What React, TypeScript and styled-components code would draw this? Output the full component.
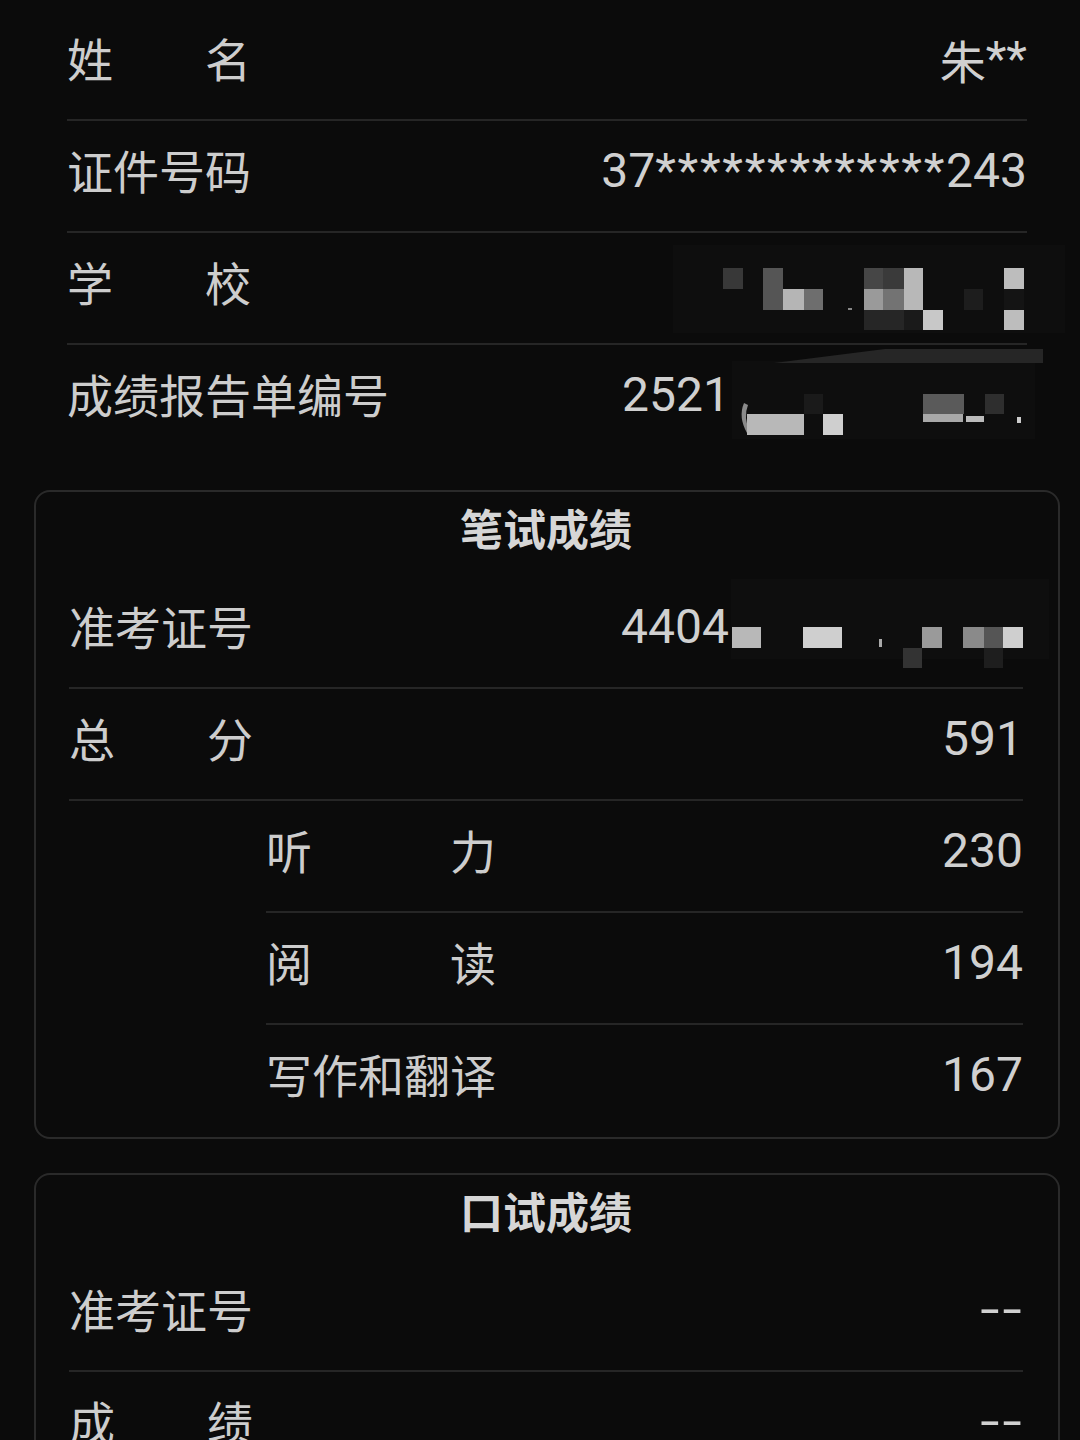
import React from 'react';
import styled, { createGlobalStyle } from 'styled-components';

const GlobalStyle = createGlobalStyle`
  html, body { margin: 0; padding: 0; background: #0b0b0b; }
  body { font-family: Roboto, "Noto Sans CJK SC", sans-serif; }
`;

const Page = styled.div`
  width: 1080px;
  height: 1440px;
  box-sizing: border-box;
  padding: 9px 20px 0 34px;
  background: #0b0b0b;
  color: #cfcfcf;
  overflow: hidden;
`;

const InfoList = styled.section`
  padding: 0 33px;
  margin-bottom: 33px;
`;

const Card = styled.section`
  border: 2px solid #2a2a2a;
  border-radius: 16px;
  padding: 0 35px 0 33px;
  margin-bottom: 34px;
`;

const CardTitle = styled.h2`
  margin: 0;
  padding-top: 9px;
  margin-bottom: 24px;
  font-family: "Noto Sans CJK SC", sans-serif;
  font-size: 43px;
  font-weight: 700;
  line-height: 52px;
  text-align: center;
  color: #d6d6d6;
`;

const Row = styled.div<{ $indent?: number; $last?: boolean }>`
  display: flex;
  align-items: center;
  justify-content: space-between;
  margin-left: ${(p) => p.$indent ?? 0}px;
  padding: 22px 0 ${(p) => (p.$last ? 38 : 36)}px;
  border-bottom: ${(p) => (p.$last ? 'none' : '2px solid #262626')};
  line-height: 52px;
`;

const Label = styled.span<{ $span?: number }>`
  font-family: "Noto Sans CJK SC", sans-serif;
  font-size: 46px;
  color: #cdcdcd;
  white-space: nowrap;
  ${(p) => (p.$span ? `width: ${p.$span}em; text-align: justify; text-align-last: justify;` : '')}
`;

const Value = styled.span`
  display: flex;
  align-items: center;
  padding-top: 4px;
  font-family: Roboto, "Noto Sans CJK SC", sans-serif;
  font-size: 48px;
  line-height: 48px;
  color: #d0d0d0;
  white-space: nowrap;
`;

const NameChar = styled.span`
  font-family: "Noto Sans CJK SC", sans-serif;
  font-size: 46px;
`;

const Stars = styled.span`
  letter-spacing: 1.7px;
`;

const Dashes = styled.span`
  display: inline-block;
  transform: scaleX(1.45);
  transform-origin: right center;
  letter-spacing: 2px;
  margin-right: -2px;
`;

const MosaicSvg = styled.svg`
  display: block;
  flex: none;
  overflow: visible;
  margin-top: -4px;
`;

type Cell = [number, number, number, number, string];

function Mosaic({ width, cells, extra }: { width: number; cells: Cell[]; extra?: React.ReactNode }) {
  return (
    <MosaicSvg width={width} height={52} viewBox={`0 0 ${width} 52`}>
      {extra}
      {cells.map(([x, y, w, h, c], i) => (
        <rect key={i} x={x} y={y} width={w} height={h} fill={c} />
      ))}
    </MosaicSvg>
  );
}

const schoolCells: Cell[] = [
  [-50, -10, 392, 88, '#0e0e0e'],
  [0, 13, 20, 21, '#383838'],
  [40, 13, 20, 42, '#555555'],
  [60, 34, 21, 21, '#b5b5b5'],
  [81, 34, 19, 21, '#6e6e6e'],
  [141, 13, 19, 21, '#464646'],
  [160, 13, 21, 21, '#3a3a3a'],
  [181, 13, 19, 42, '#b8b8b8'],
  [141, 34, 19, 21, '#9a9a9a'],
  [160, 34, 21, 21, '#737373'],
  [141, 55, 40, 20, '#262626'],
  [181, 55, 19, 20, '#1a1a1a'],
  [200, 55, 20, 20, '#c8c8c8'],
  [241, 34, 19, 21, '#1d1d1d'],
  [281, 13, 20, 21, '#bdbdbd'],
  [281, 34, 20, 21, '#141414'],
  [281, 55, 20, 20, '#bdbdbd'],
  [125, 53, 4, 2, '#888888'],
];

const reportCells: Cell[] = [
  [74, 27, 19, 20, '#1a1a1a'],
  [17, 47, 57, 21, '#b8b8b8'],
  [93, 47, 20, 21, '#cfcfcf'],
  [193, 27, 41, 20, '#5a5a5a'],
  [255, 27, 19, 20, '#2e2e2e'],
  [193, 47, 40, 8, '#a8a8a8'],
  [236, 49, 18, 6, '#bbbbbb'],
  [287, 50, 4, 6, '#cccccc'],
];

const admitCells: Cell[] = [
  [2, -20, 318, 80, '#0e0e0e'],
  [3, 28, 29, 21, '#b8b8b8'],
  [74, 28, 39, 21, '#cfcfcf'],
  [150, 40, 3, 8, '#aaaaaa'],
  [174, 49, 19, 20, '#333333'],
  [193, 28, 20, 21, '#9a9a9a'],
  [234, 28, 21, 21, '#8a8a8a'],
  [255, 28, 19, 21, '#555555'],
  [274, 28, 20, 21, '#cfcfcf'],
  [255, 49, 19, 20, '#1e1e1e'],
];

export default function App() {
  return (
    <>
      <GlobalStyle />
      <Page>
        <InfoList>
          <Row>
            <Label $span={4}>姓名</Label>
            <Value>
              <NameChar>朱</NameChar>**
            </Value>
          </Row>
          <Row>
            <Label>证件号码</Label>
            <Value>
              37<Stars>*************</Stars>243
            </Value>
          </Row>
          <Row>
            <Label $span={4}>学校</Label>
            <Value>
              <Mosaic width={304} cells={schoolCells} />
            </Value>
          </Row>
          <Row $last>
            <Label>成绩报告单编号</Label>
            <Value>
              2521
              <Mosaic
                width={297}
                cells={reportCells}
                extra={
                  <>
                    <rect x={2} y={-6} width={303} height={78} fill="#0e0e0e" />
                    <polygon points="44,-4 155,-18 313,-18 313,-4" fill="#262626" />
                    <path d="M14 36 Q8 50 17 66 L20 66 Q13 50 18 38 Z" fill="#8a8a8a" />
                  </>
                }
              />
            </Value>
          </Row>
        </InfoList>

        <Card>
          <CardTitle>笔试成绩</CardTitle>
          <Row>
            <Label>准考证号</Label>
            <Value>
              4404
              <Mosaic width={294} cells={admitCells} />
            </Value>
          </Row>
          <Row>
            <Label $span={4}>总分</Label>
            <Value>591</Value>
          </Row>
          <Row $indent={197}>
            <Label $span={5}>听力</Label>
            <Value>230</Value>
          </Row>
          <Row $indent={197}>
            <Label $span={5}>阅读</Label>
            <Value>194</Value>
          </Row>
          <Row $indent={197} $last>
            <Label>写作和翻译</Label>
            <Value>167</Value>
          </Row>
        </Card>

        <Card>
          <CardTitle>口试成绩</CardTitle>
          <Row>
            <Label>准考证号</Label>
            <Value>
              <Dashes>--</Dashes>
            </Value>
          </Row>
          <Row $last>
            <Label $span={4}>成绩</Label>
            <Value>
              <Dashes>--</Dashes>
            </Value>
          </Row>
        </Card>
      </Page>
    </>
  );
}
